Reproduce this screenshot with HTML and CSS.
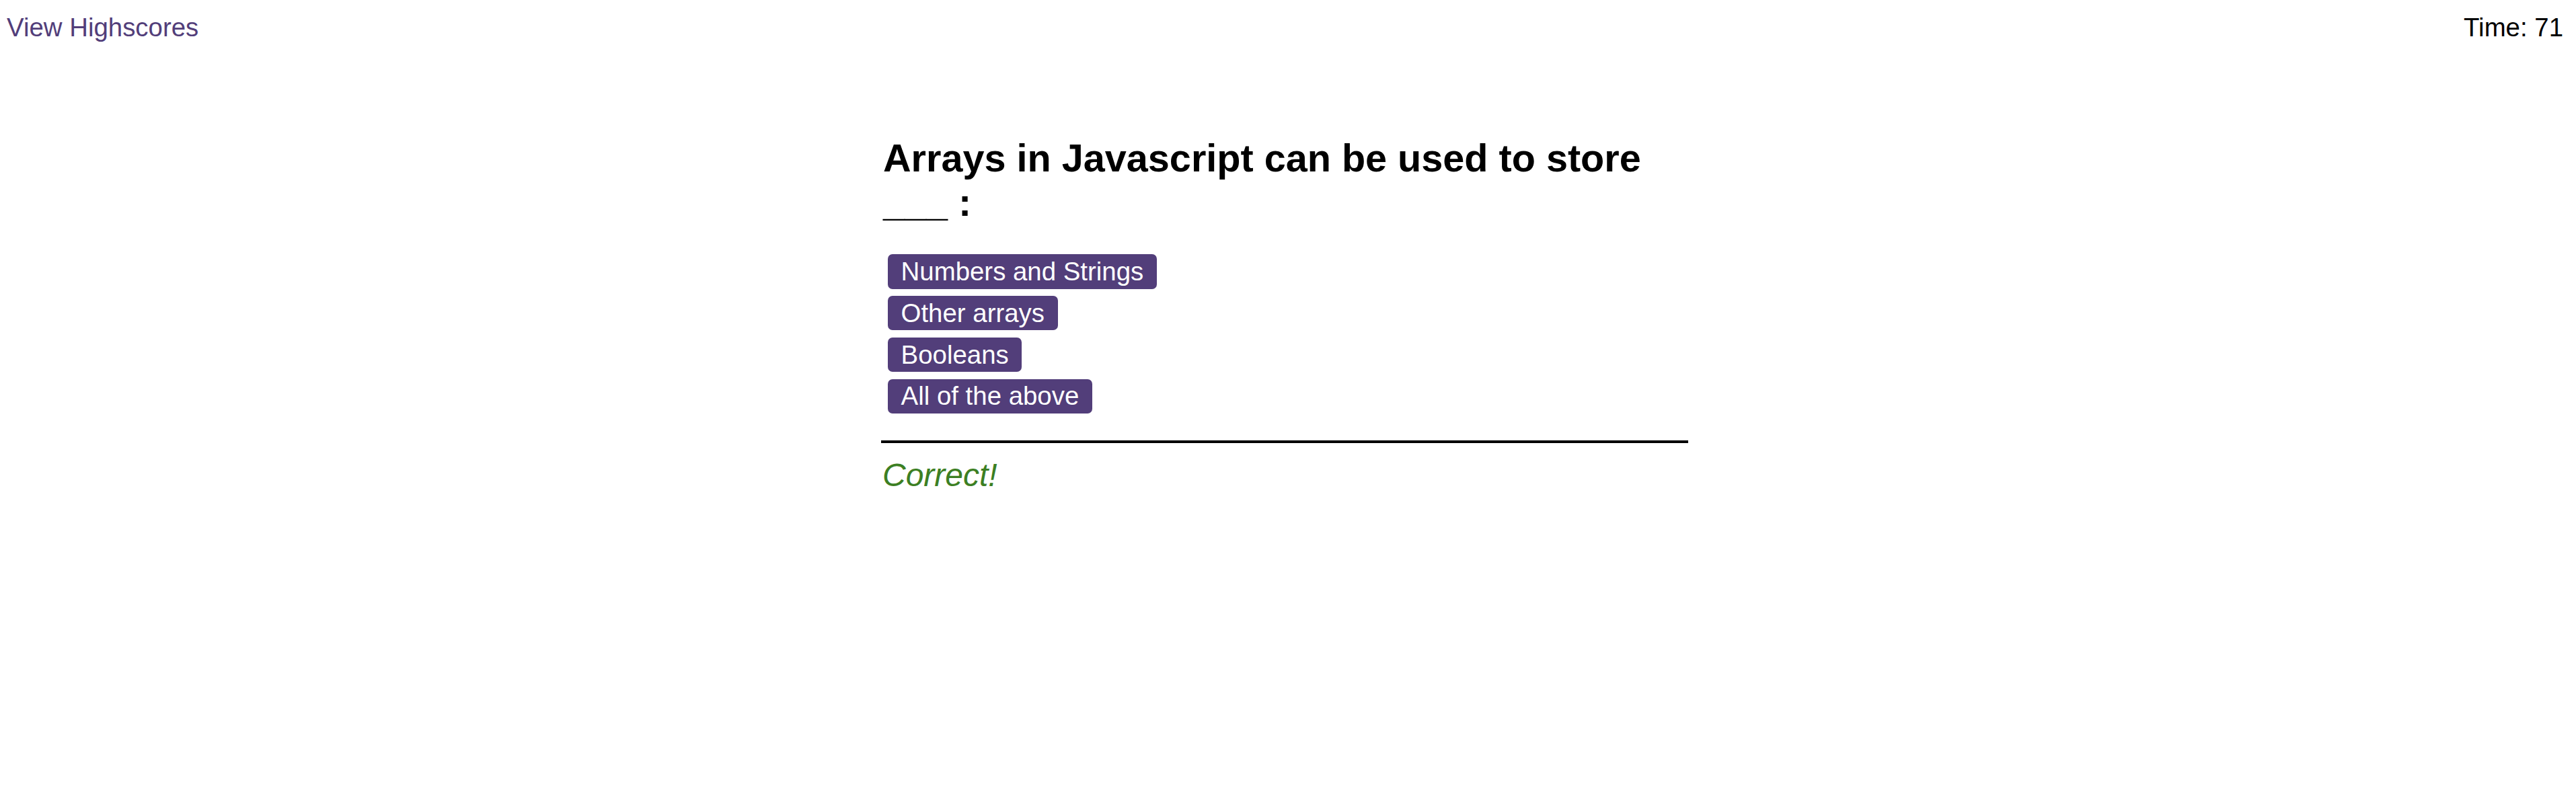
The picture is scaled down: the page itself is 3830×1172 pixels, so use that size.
FILE: index.html
```html
<!DOCTYPE html>
<html lang="en">
<head>
<meta charset="utf-8">
<title>Code Quiz</title>
<link rel="stylesheet" href="styles.css">
</head>
<body>
<header class="topbar">
  <a class="highscores" href="#">View Highscores</a>
  <div class="timer">Time: 71</div>
</header>
<main class="quiz">
  <h2 class="question">Arrays in Javascript can be used to store ___ :</h2>
  <div class="choices">
    <button class="choice">Numbers and Strings</button>
    <button class="choice">Other arrays</button>
    <button class="choice">Booleans</button>
    <button class="choice">All of the above</button>
  </div>
  <div class="divider"></div>
  <p class="feedback">Correct!</p>
</main>
</body>
</html>
```

FILE: styles.css
```css
html, body {
  margin: 0;
  padding: 0;
  background: #ffffff;
}

body {
  font-family: "Liberation Sans", Arial, sans-serif;
  font-size: 38.4px;
  color: #000000;
}

.topbar {
  display: flex;
  justify-content: space-between;
  align-items: flex-start;
  padding: 18.6px 19px 0 10px;
  line-height: normal;
}

.highscores {
  color: #523e7a;
  text-decoration: none;
}

.timer {
  color: #000000;
}

.quiz {
  width: 1200px;
  margin-left: calc(50% - 605px);
}

.question {
  font-size: 57.6px;
  font-weight: bold;
  line-height: normal;
  margin: 139px 0 44.6px 3px;
}

.choices {
  display: flex;
  flex-direction: column;
  align-items: flex-start;
  gap: 10.3px;
  padding-left: 10px;
}

.choice {
  font-family: "Liberation Sans", Arial, sans-serif;
  font-size: 38.4px;
  line-height: normal;
  color: #ffffff;
  background: #523e7a;
  border: none;
  border-radius: 7px;
  padding: 3.75px 19.6px;
  margin: 0;
  cursor: pointer;
}

.divider {
  height: 4.3px;
  background: #000000;
  margin-top: 40px;
}

.feedback {
  font-size: 48px;
  font-style: italic;
  color: #3c7f23;
  margin: 20px 0 0 2px;
  line-height: normal;
}
```
